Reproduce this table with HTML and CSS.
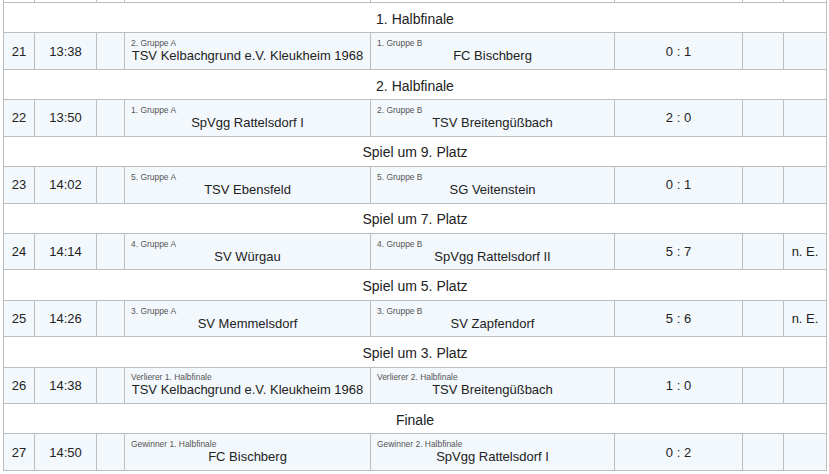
FILE: index.html
```html
<!DOCTYPE html>
<html lang="de">
<head>
<meta charset="utf-8">
<title>Spielplan Finalrunde</title>
<link rel="stylesheet" href="styles.css">
</head>
<body>
<table class="plan">
  <colgroup>
    <col class="c-nr"><col class="c-time"><col class="c-x"><col class="c-team"><col class="c-team2"><col class="c-score"><col class="c-a"><col class="c-b">
  </colgroup>
  <tbody>
    <tr class="cut"><td></td><td></td><td></td><td></td><td></td><td></td><td></td><td></td></tr>

    <tr class="sec"><td colspan="8">1. Halbfinale</td></tr>
    <tr class="match">
      <td>21</td><td>13:38</td><td></td>
      <td class="team"><div class="lbl">2. Gruppe A</div><div class="name">TSV Kelbachgrund e.V. Kleukheim 1968</div></td>
      <td class="team"><div class="lbl">1. Gruppe B</div><div class="name">FC Bischberg</div></td>
      <td>0 : 1</td><td></td><td></td>
    </tr>

    <tr class="sec"><td colspan="8">2. Halbfinale</td></tr>
    <tr class="match">
      <td>22</td><td>13:50</td><td></td>
      <td class="team"><div class="lbl">1. Gruppe A</div><div class="name">SpVgg Rattelsdorf I</div></td>
      <td class="team"><div class="lbl">2. Gruppe B</div><div class="name">TSV Breitengüßbach</div></td>
      <td>2 : 0</td><td></td><td></td>
    </tr>

    <tr class="sec"><td colspan="8">Spiel um 9. Platz</td></tr>
    <tr class="match">
      <td>23</td><td>14:02</td><td></td>
      <td class="team"><div class="lbl">5. Gruppe A</div><div class="name">TSV Ebensfeld</div></td>
      <td class="team"><div class="lbl">5. Gruppe B</div><div class="name">SG Veitenstein</div></td>
      <td>0 : 1</td><td></td><td></td>
    </tr>

    <tr class="sec"><td colspan="8">Spiel um 7. Platz</td></tr>
    <tr class="match">
      <td>24</td><td>14:14</td><td></td>
      <td class="team"><div class="lbl">4. Gruppe A</div><div class="name">SV Würgau</div></td>
      <td class="team"><div class="lbl">4. Gruppe B</div><div class="name">SpVgg Rattelsdorf II</div></td>
      <td>5 : 7</td><td></td><td>n. E.</td>
    </tr>

    <tr class="sec"><td colspan="8">Spiel um 5. Platz</td></tr>
    <tr class="match">
      <td>25</td><td>14:26</td><td></td>
      <td class="team"><div class="lbl">3. Gruppe A</div><div class="name">SV Memmelsdorf</div></td>
      <td class="team"><div class="lbl">3. Gruppe B</div><div class="name">SV Zapfendorf</div></td>
      <td>5 : 6</td><td></td><td>n. E.</td>
    </tr>

    <tr class="sec"><td colspan="8">Spiel um 3. Platz</td></tr>
    <tr class="match">
      <td>26</td><td>14:38</td><td></td>
      <td class="team"><div class="lbl">Verlierer 1. Halbfinale</div><div class="name">TSV Kelbachgrund e.V. Kleukheim 1968</div></td>
      <td class="team"><div class="lbl">Verlierer 2. Halbfinale</div><div class="name">TSV Breitengüßbach</div></td>
      <td>1 : 0</td><td></td><td></td>
    </tr>

    <tr class="sec"><td colspan="8">Finale</td></tr>
    <tr class="match">
      <td>27</td><td>14:50</td><td></td>
      <td class="team"><div class="lbl">Gewinner 1. Halbfinale</div><div class="name">FC Bischberg</div></td>
      <td class="team"><div class="lbl">Gewinner 2. Halbfinale</div><div class="name">SpVgg Rattelsdorf I</div></td>
      <td>0 : 2</td><td></td><td></td>
    </tr>
  </tbody>
</table>
</body>
</html>
```
FILE: styles.css
```css
html, body {
  margin: 0;
  padding: 0;
  background: #fff;
}
body {
  font-family: "Liberation Sans", Arial, sans-serif;
  color: #222;
  padding-left: 3px;
}
.plan {
  border-collapse: collapse;
  table-layout: fixed;
  width: 824px;
  font-size: 13px;
}
.c-nr { width: 31px; }
.c-time { width: 62px; }
.c-x { width: 28px; }
.c-team { width: 246px; }
.c-team2 { width: 244px; }
.c-score { width: 128px; }
.c-a { width: 41px; }
.c-b { width: 43px; }

.plan td {
  border: 1px solid #bdbdbd;
  padding: 0;
  text-align: center;
  vertical-align: middle;
}
.cut td {
  border-top: 0;
  height: 2px;
}
.sec td {
  height: 30.43px;
  font-size: 14px;
  line-height: 16px;
  padding-top: 2px;
  box-sizing: border-box;
  background: #fff;
}
.match td {
  height: 35.43px;
  background: #f3f8fd;
}
.team {
  padding: 0 6px !important;
}
.lbl {
  font-size: 8.45px;
  line-height: 9px;
  text-align: left;
  color: #555;
}
.name {
  font-size: 13px;
  line-height: 15px;
  text-align: center;
  white-space: nowrap;
}
```
